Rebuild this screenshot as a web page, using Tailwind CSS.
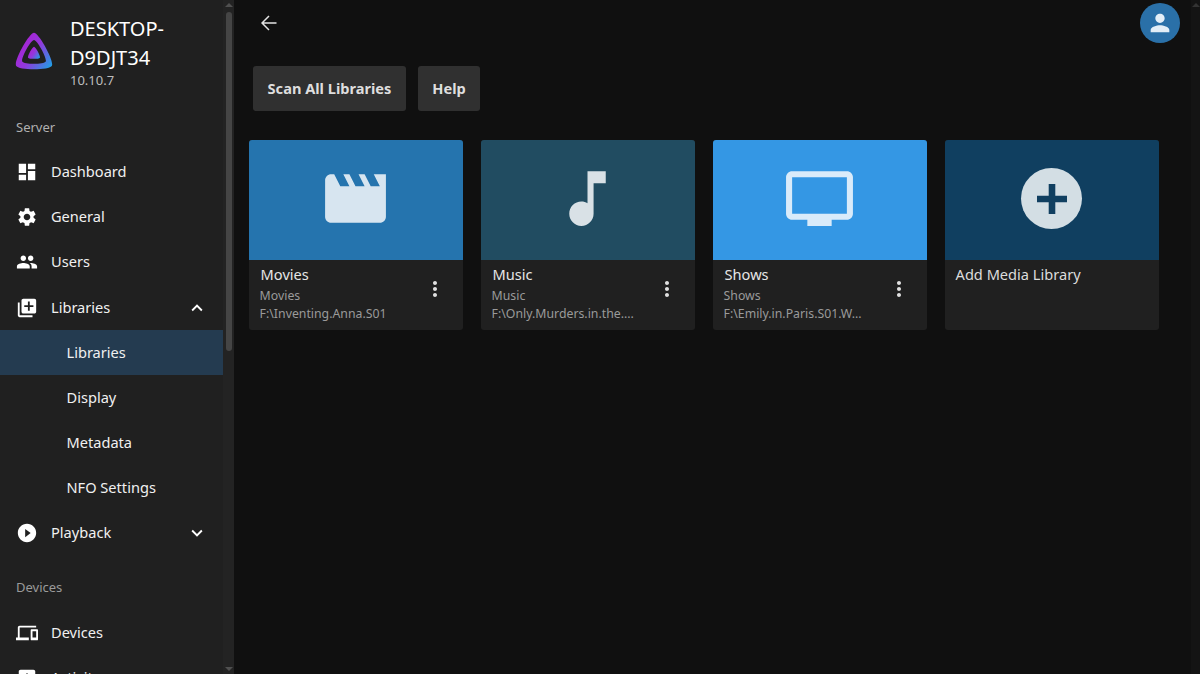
<!DOCTYPE html>
<html>
<head>
<meta charset="utf-8">
<title>Libraries</title>
<script src="https://cdn.jsdelivr.net/npm/@tailwindcss/browser@4"></script>
</head>
<body class="bg-[#101010] text-white font-['Noto_Sans',sans-serif] overflow-hidden">
<div class="flex h-[674px] w-[1200px] overflow-hidden">

  <!-- Sidebar -->
  <aside class="flex w-[234px] shrink-0 bg-[#202020] overflow-hidden">
    <div class="w-[223px] shrink-0">
      <div class="flex items-center h-[100px] pl-[14px] pt-[1px]">
        <svg class="w-[40px] h-[40px] shrink-0" viewBox="0 0 512 512">
          <defs>
            <linearGradient id="jf" x1="0" y1="0.2" x2="1" y2="0.9">
              <stop offset="0" stop-color="#b01cd0"/>
              <stop offset="0.5" stop-color="#9238dc"/>
              <stop offset="1" stop-color="#1fa0e6"/>
            </linearGradient>
          </defs>
          <path fill="url(#jf)" d="M256 201.6c-20.4 0-86.2 119.3-76.2 139.4s142.5 19.9 152.4 0-55.7-139.4-76.2-139.4z"/>
          <path fill="url(#jf)" d="M256 23.3c-61.6 0-259.8 359.4-229.6 420.1s429.3 60 459.2 0S317.6 23.3 256 23.3zM406.5 390.8c-19.6 39.3-281.1 39.8-300.9 0s110.1-275.3 150.4-275.3 170.1 235.9 150.5 275.3z"/>
        </svg>
        <div class="ml-[16px]">
          <div class="text-[20px] leading-[29px] w-[110px]">DESKTOP-D9DJT34</div>
          <div class="text-[13px] leading-[16px] text-[#bdbdbd]">10.10.7</div>
        </div>
      </div>

      <div class="h-[49.6px] pl-4 pt-[17px] text-[13px] leading-[20px] text-[#b0b0b0]">Server</div>

      <nav class="text-[14.6px] text-[#f0f0f0]">
        <a class="flex items-center h-[45.125px] pl-4">
          <svg class="w-[22px] h-[22px] fill-white" viewBox="0 0 24 24"><path d="M3 13h8V3H3v10zm0 8h8v-6H3v6zm10 0h8V11h-8v10zm0-18v6h8V3h-8z"/></svg>
          <span class="ml-[13px]">Dashboard</span>
        </a>
        <a class="flex items-center h-[45.125px] pl-4">
          <svg class="w-[22px] h-[22px] fill-white" viewBox="0 0 24 24"><path d="M19.14 12.94c.04-.3.06-.61.06-.94 0-.32-.02-.64-.07-.94l2.03-1.58c.18-.14.23-.41.12-.61l-1.92-3.32c-.12-.22-.37-.29-.59-.22l-2.39.96c-.5-.38-1.03-.7-1.62-.94l-.36-2.54c-.04-.24-.24-.41-.48-.41h-3.84c-.24 0-.43.17-.47.41l-.36 2.54c-.59.24-1.13.57-1.62.94l-2.39-.96c-.22-.08-.47 0-.59.22L2.74 8.87c-.12.21-.08.47.12.61l2.03 1.58c-.05.3-.09.63-.09.94s.02.64.07.94l-2.03 1.58c-.18.14-.23.41-.12.61l1.92 3.32c.12.22.37.29.59.22l2.39-.96c.5.38 1.03.7 1.62.94l.36 2.54c.05.24.24.41.48.41h3.84c.24 0 .44-.17.47-.41l.36-2.54c.59-.24 1.13-.56 1.62-.94l2.39.96c.22.08.47 0 .59-.22l1.92-3.32c.12-.22.07-.47-.12-.61l-2.01-1.58zM12 15.6c-1.98 0-3.6-1.62-3.6-3.6s1.62-3.6 3.6-3.6 3.6 1.62 3.6 3.6-1.62 3.6-3.6 3.6z"/></svg>
          <span class="ml-[13px]">General</span>
        </a>
        <a class="flex items-center h-[45.125px] pl-4">
          <svg class="w-[22px] h-[22px] fill-white" viewBox="0 0 24 24"><path d="M16 11c1.66 0 2.99-1.34 2.99-3S17.66 5 16 5c-1.66 0-3 1.34-3 3s1.34 3 3 3zm-8 0c1.66 0 2.99-1.34 2.99-3S9.66 5 8 5C6.34 5 5 6.34 5 8s1.34 3 3 3zm0 2c-2.33 0-7 1.17-7 3.5V19h14v-2.5c0-2.33-4.67-3.5-7-3.5zm8 0c-.29 0-.62.02-.97.05 1.16.84 1.97 1.97 1.97 3.45V19h6v-2.5c0-2.33-4.67-3.5-7-3.5z"/></svg>
          <span class="ml-[13px]">Users</span>
        </a>
        <a class="flex items-center h-[45.125px] pl-4 pr-[15px]">
          <svg class="w-[22px] h-[22px] fill-white" viewBox="0 0 24 24"><path d="M4 6H2v14c0 1.1.9 2 2 2h14v-2H4V6zm16-4H8c-1.1 0-2 .9-2 2v12c0 1.1.9 2 2 2h12c1.1 0 2-.9 2-2V4c0-1.1-.9-2-2-2zm-1 9h-4v4h-2v-4H9V9h4V5h2v4h4v2z"/></svg>
          <span class="ml-[13px] flex-1">Libraries</span>
          <svg class="w-[22px] h-[22px] fill-white" viewBox="0 0 24 24"><path d="M12 8l-6 6 1.41 1.41L12 10.83l4.59 4.58L18 14z"/></svg>
        </a>
        <a class="flex items-center h-[45.125px] pl-[66.5px] bg-[#243b50]">Libraries</a>
        <a class="flex items-center h-[45.125px] pl-[66.5px]">Display</a>
        <a class="flex items-center h-[45.125px] pl-[66.5px]">Metadata</a>
        <a class="flex items-center h-[45.125px] pl-[66.5px]">NFO Settings</a>
        <a class="flex items-center h-[45.125px] pl-4 pr-[15px]">
          <svg class="w-[22px] h-[22px] fill-white" viewBox="0 0 24 24"><path d="M12 2C6.48 2 2 6.48 2 12s4.48 10 10 10 10-4.48 10-10S17.52 2 12 2zm-2 14.5v-9l6 4.5-6 4.5z"/></svg>
          <span class="ml-[13px] flex-1">Playback</span>
          <svg class="w-[22px] h-[22px] fill-white" viewBox="0 0 24 24"><path d="M16.59 8.59L12 13.17 7.41 8.59 6 10l6 6 6-6z"/></svg>
        </a>
      </nav>

      <div class="h-[54.4px] pl-4 pt-[21px] text-[13px] leading-[20px] text-[#9a9a9a]">Devices</div>

      <nav class="text-[14.6px] text-[#f0f0f0]">
        <a class="flex items-center h-[45.125px] pl-4">
          <svg class="w-[22px] h-[22px] fill-white" viewBox="0 0 24 24"><path d="M4 6h18V4H4c-1.1 0-2 .9-2 2v11H0v3h14v-3H4V6zm19 2h-6c-.55 0-1 .45-1 1v10c0 .55.45 1 1 1h6c.55 0 1-.45 1-1V9c0-.55-.45-1-1-1zm-1 9h-4v-7h4v7z"/></svg>
          <span class="ml-[13px]">Devices</span>
        </a>
        <a class="flex items-center h-[45.125px] pl-4">
          <svg class="w-[22px] h-[22px] fill-white" viewBox="0 0 24 24"><path d="M19 3H5c-1.1 0-2 .9-2 2v14c0 1.1.9 2 2 2h14c1.1 0 2-.9 2-2V5c0-1.1-.9-2-2-2zM9 17H7v-7h2v7zm4 0h-2V7h2v10zm4 0h-2v-4h2v4z"/></svg>
          <span class="ml-[13px]">Activity</span>
        </a>
      </nav>
    </div>

    <!-- Sidebar scrollbar -->
    <div class="flex flex-col items-center w-[11px] h-[674px] shrink-0 bg-[#232323]">
      <div class="w-0 h-0 mt-[3px] border-x-[4px] border-x-transparent border-b-[4px] border-b-[#505050]"></div>
      <div class="w-[6px] h-[339px] mt-[5px] rounded-[3px] bg-[#454545]"></div>
      <div class="w-0 h-0 mt-auto mb-[3px] border-x-[4px] border-x-transparent border-t-[4px] border-t-[#505050]"></div>
    </div>
  </aside>

  <!-- Main -->
  <main class="flex-1 relative">
    <button class="absolute left-[27px] top-[15px] w-4 h-4">
      <svg class="w-4 h-4" viewBox="0 0 16 16" fill="none" stroke="#e4e4e4" stroke-width="1.5"><path d="M15.5 8H1.2M8 1L1 8l7 7"/></svg>
    </button>
    <div class="absolute right-[20px] top-[3px] flex items-center justify-center w-10 h-10 rounded-full bg-[#2a70a8]">
      <svg class="w-[28px] h-[28px] fill-[#e3eef7]" viewBox="0 0 24 24"><path d="M12 12c2.21 0 4-1.79 4-4s-1.79-4-4-4-4 1.79-4 4 1.79 4 4 4zm0 2c-2.67 0-8 1.34-8 4v2h16v-2c0-2.66-5.33-4-8-4z"/></svg>
    </div>

    <div class="pt-[66px] pl-[19px]">
      <div class="flex gap-3 text-[14.6px] font-bold text-[#dedede]">
        <button class="h-[45px] w-[153px] rounded-[3px] bg-[#303030]">Scan All Libraries</button>
        <button class="h-[45px] w-[62px] rounded-[3px] bg-[#303030]">Help</button>
      </div>

      <div class="flex gap-[17.6px] mt-[29px] -ml-[4.4px]">
        <div class="w-[214.4px] h-[190px] rounded-[3px] bg-[#202020] overflow-hidden">
          <div class="flex items-center justify-center h-[120px] pb-[3px] bg-[#2574ae]">
            <svg class="w-[73px] h-[73px] fill-[#d7e5f0]" viewBox="0 0 24 24"><path d="M18 4l2 4h-3l-2-4h-2l2 4h-3l-2-4H8l2 4H7L5 4H4c-1.1 0-1.99.9-1.99 2L2 18c0 1.1.9 2 2 2h16c1.1 0 2-.9 2-2V4h-4z"/></svg>
          </div>
          <div class="flex items-start pl-[11px] pr-[17px] pt-[4px] h-[70px]">
            <div class="flex-1">
              <div class="text-[14.6px] leading-[20px] pl-[1px] text-[#e6e6e6]">Movies</div>
              <div class="text-[12.3px] leading-[19px] mt-[1.5px] text-[#9a9a9a]">Movies</div>
              <div class="text-[12.3px] leading-[18px] text-[#9a9a9a]">F:\Inventing.Anna.S01</div>
            </div>
            <svg class="w-[24px] h-[24px] -mr-[1px] mt-[13px] fill-[#e0e0e0]" viewBox="0 0 24 24"><path d="M12 8c1.1 0 2-.9 2-2s-.9-2-2-2-2 .9-2 2 .9 2 2 2zm0 2c-1.1 0-2 .9-2 2s.9 2 2 2 2-.9 2-2-.9-2-2-2zm0 6c-1.1 0-2 .9-2 2s.9 2 2 2 2-.9 2-2-.9-2-2-2z"/></svg>
          </div>
        </div>

        <div class="w-[214.4px] h-[190px] rounded-[3px] bg-[#202020] overflow-hidden">
          <div class="flex items-center justify-center h-[120px] pb-[3px] bg-[#214c61]">
            <svg class="w-[73px] h-[73px] fill-[#d9e1e6]" viewBox="0 0 24 24"><path d="M12 3v10.55c-.59-.34-1.27-.55-2-.55-2.21 0-4 1.79-4 4s1.79 4 4 4 4-1.79 4-4V7h4V3h-6z"/></svg>
          </div>
          <div class="flex items-start pl-[11px] pr-[17px] pt-[4px] h-[70px]">
            <div class="flex-1">
              <div class="text-[14.6px] leading-[20px] pl-[1px] text-[#e6e6e6]">Music</div>
              <div class="text-[12.3px] leading-[19px] mt-[1.5px] text-[#9a9a9a]">Music</div>
              <div class="text-[12.3px] leading-[18px] text-[#9a9a9a]">F:\Only.Murders.in.the....</div>
            </div>
            <svg class="w-[24px] h-[24px] -mr-[1px] mt-[13px] fill-[#e0e0e0]" viewBox="0 0 24 24"><path d="M12 8c1.1 0 2-.9 2-2s-.9-2-2-2-2 .9-2 2 .9 2 2 2zm0 2c-1.1 0-2 .9-2 2s.9 2 2 2 2-.9 2-2-.9-2-2-2zm0 6c-1.1 0-2 .9-2 2s.9 2 2 2 2-.9 2-2-.9-2-2-2z"/></svg>
          </div>
        </div>

        <div class="w-[214.4px] h-[190px] rounded-[3px] bg-[#202020] overflow-hidden">
          <div class="flex items-center justify-center h-[120px] pb-[3px] bg-[#3497e4]">
            <svg class="w-[73px] h-[73px] fill-[#d9ebfa]" viewBox="0 0 24 24"><path d="M21 3H3c-1.1 0-2 .9-2 2v12c0 1.1.9 2 2 2h5v2h8v-2h5c1.1 0 1.99-.9 1.99-2L23 5c0-1.1-.9-2-2-2zm0 14H3V5h18v12z"/></svg>
          </div>
          <div class="flex items-start pl-[11px] pr-[17px] pt-[4px] h-[70px]">
            <div class="flex-1">
              <div class="text-[14.6px] leading-[20px] pl-[1px] text-[#e6e6e6]">Shows</div>
              <div class="text-[12.3px] leading-[19px] mt-[1.5px] text-[#9a9a9a]">Shows</div>
              <div class="text-[12.3px] leading-[18px] text-[#9a9a9a]">F:\Emily.in.Paris.S01.W...</div>
            </div>
            <svg class="w-[24px] h-[24px] -mr-[1px] mt-[13px] fill-[#e0e0e0]" viewBox="0 0 24 24"><path d="M12 8c1.1 0 2-.9 2-2s-.9-2-2-2-2 .9-2 2 .9 2 2 2zm0 2c-1.1 0-2 .9-2 2s.9 2 2 2 2-.9 2-2-.9-2-2-2zm0 6c-1.1 0-2 .9-2 2s.9 2 2 2 2-.9 2-2-.9-2-2-2z"/></svg>
          </div>
        </div>

        <div class="w-[214.4px] h-[190px] rounded-[3px] bg-[#202020] overflow-hidden">
          <div class="flex items-center justify-center h-[120px] pb-[3px] bg-[#103f60]">
            <div class="flex items-center justify-center w-[61px] h-[61px] rounded-full bg-[#d3dee4]">
              <svg class="w-[30px] h-[30px] fill-[#103f60]" viewBox="0 0 30 30"><path d="M11.7 0h6.6v11.7H30v6.6H18.3V30h-6.6V18.3H0v-6.6h11.7z"/></svg>
            </div>
          </div>
          <div class="pl-[11px] pt-[4px] text-[14.6px] leading-[20px] text-[#dcdcdc]">Add Media Library</div>
        </div>
      </div>
    </div>

    <!-- Page scrollbar -->
    <div class="absolute right-0 top-0 w-[9px] h-[674px] bg-[#141414]">
      <div class="w-0 h-0 mx-auto mt-[3px] border-x-[4px] border-x-transparent border-b-[4px] border-b-[#333333]"></div>
    </div>
  </main>
</div>
</body>
</html>
